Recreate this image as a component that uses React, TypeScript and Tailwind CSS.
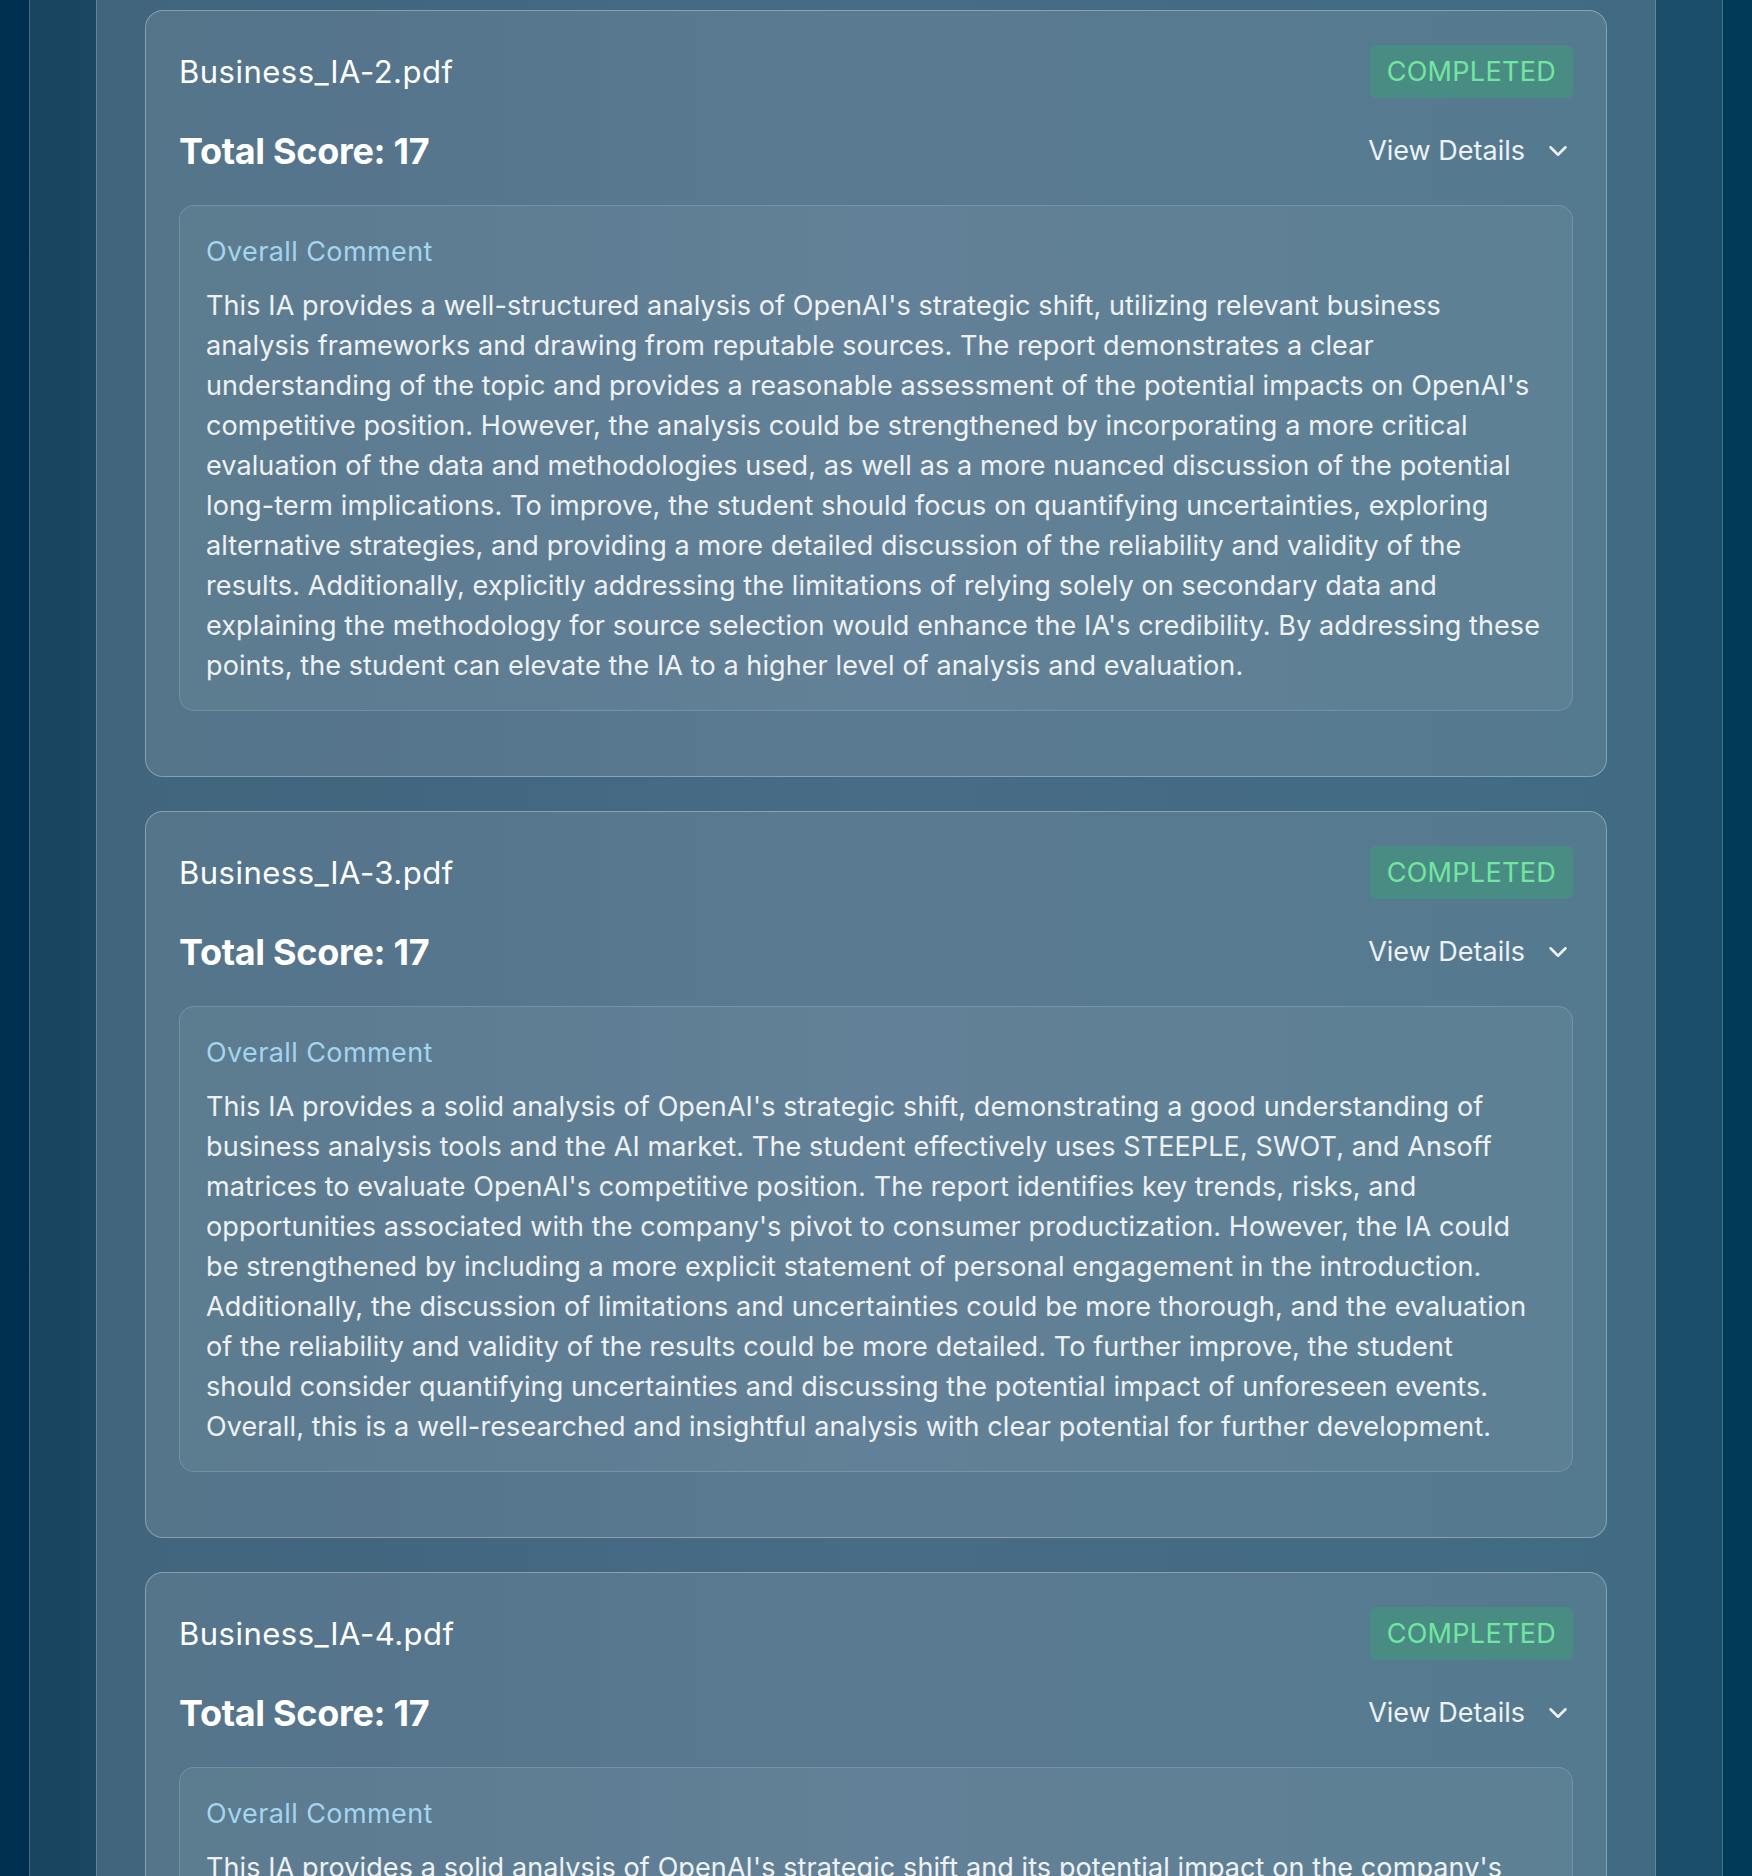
import { ChevronDown } from "lucide-react";

interface Result {
  file: string;
  score: number;
  comment: string;
}

const results: Result[] = [
  {
    file: "Business_IA-2.pdf",
    score: 17,
    comment:
      "This IA provides a well-structured analysis of OpenAI's strategic shift, utilizing relevant business analysis frameworks and drawing from reputable sources. The report demonstrates a clear understanding of the topic and provides a reasonable assessment of the potential impacts on OpenAI's competitive position. However, the analysis could be strengthened by incorporating a more critical evaluation of the data and methodologies used, as well as a more nuanced discussion of the potential long-term implications. To improve, the student should focus on quantifying uncertainties, exploring alternative strategies, and providing a more detailed discussion of the reliability and validity of the results. Additionally, explicitly addressing the limitations of relying solely on secondary data and explaining the methodology for source selection would enhance the IA's credibility. By addressing these points, the student can elevate the IA to a higher level of analysis and evaluation.",
  },
  {
    file: "Business_IA-3.pdf",
    score: 17,
    comment:
      "This IA provides a solid analysis of OpenAI's strategic shift, demonstrating a good understanding of business analysis tools and the AI market. The student effectively uses STEEPLE, SWOT, and Ansoff matrices to evaluate OpenAI's competitive position. The report identifies key trends, risks, and opportunities associated with the company's pivot to consumer productization. However, the IA could be strengthened by including a more explicit statement of personal engagement in the introduction. Additionally, the discussion of limitations and uncertainties could be more thorough, and the evaluation of the reliability and validity of the results could be more detailed. To further improve, the student should consider quantifying uncertainties and discussing the potential impact of unforeseen events. Overall, this is a well-researched and insightful analysis with clear potential for further development.",
  },
  {
    file: "Business_IA-4.pdf",
    score: 17,
    comment:
      "This IA provides a solid analysis of OpenAI's strategic shift and its potential impact on the company's competitive position. The student applies a range of business tools to support the argument, and the conclusions follow from the evidence presented. The evaluation could be developed further by considering the limitations of the secondary sources used.",
  },
];

function ResultCard({ result }: { result: Result }) {
  return (
    <div className="rounded-[18px] border border-white/30 bg-white/10 px-[33px] pt-[34px] pb-[65px]">
      {/* header: file name + status */}
      <div className="flex items-center justify-between">
        <h3 className="text-[31px] leading-[42px] tracking-[0.5px] text-white">{result.file}</h3>
        <span className="rounded-[6px] bg-[#22c55e]/25 px-[17px] py-[6.5px] text-[27px] leading-[40px] tracking-[0.3px] text-[#72e6a0]">
          COMPLETED
        </span>
      </div>

      {/* score + details toggle */}
      <div className="mt-[29px] flex items-center justify-between">
        <h2 className="text-[36px] font-bold leading-[48px] tracking-[-0.3px] text-white">
          Total Score: {result.score}
        </h2>
        <button className="flex items-center gap-[18px] text-[27px] leading-[40px] text-white/90">
          View Details
          <ChevronDown className="h-[30px] w-[30px]" strokeWidth={2} />
        </button>
      </div>

      {/* overall comment */}
      <div className="mt-[30px] rounded-[15px] border border-white/15 bg-white/5 pl-[26px] pr-[30px] pt-[25px] pb-[24px]">
        <h4 className="mb-[13px] text-[27px] leading-[42px] tracking-[0.4px] text-[#a3d6ee]">
          Overall Comment
        </h4>
        <p className="text-[27px] leading-[40px] tracking-[0.1px] text-white/90">{result.comment}</p>
      </div>
    </div>
  );
}

export default function App() {
  return (
    <div
      className="min-h-screen bg-gradient-to-r from-[#00304f] via-[#0b3a5e] to-[#003a58] px-[29px]"
      style={{ fontFamily: "Inter, 'Noto Sans', 'Liberation Sans', sans-serif" }}
    >
      <div className="min-h-screen border-x border-white/20 bg-white/10 px-[66px]">
        <div className="flex min-h-screen flex-col gap-[34px] border-x border-white/20 bg-white/[0.17] px-[48px] pt-[10px] pb-[40px]">
          {results.map((r) => (
            <ResultCard key={r.file} result={r} />
          ))}
        </div>
      </div>
    </div>
  );
}
